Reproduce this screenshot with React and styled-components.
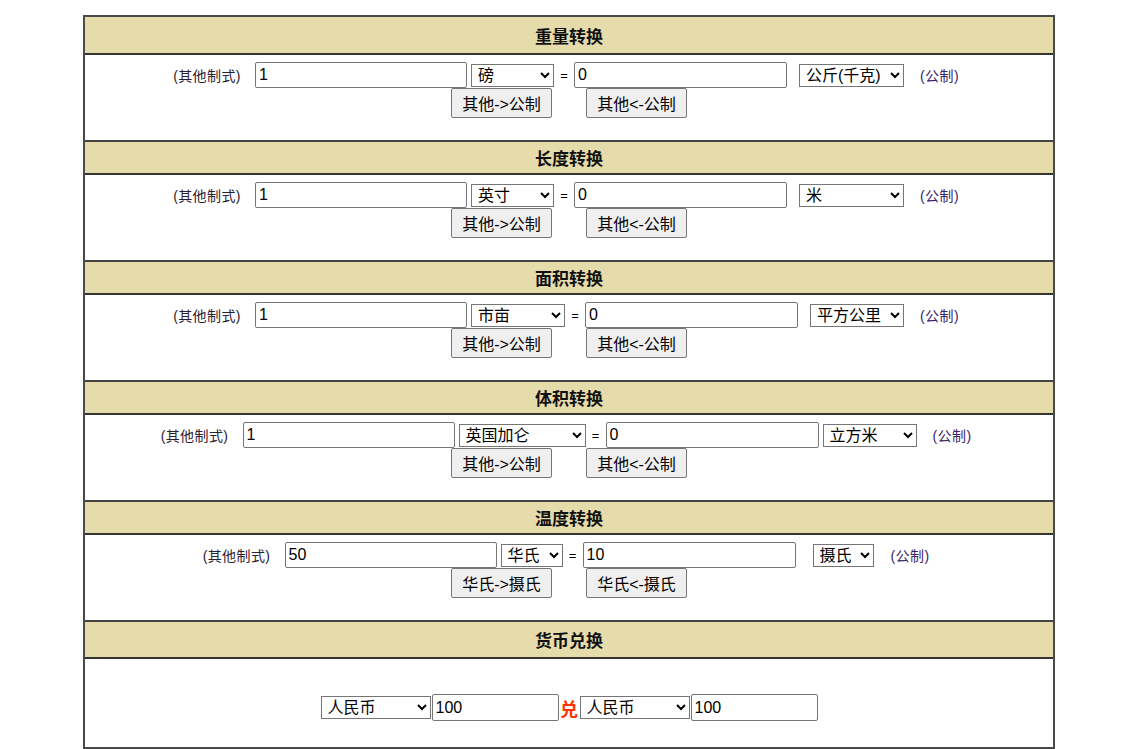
import React from 'react';
import styled, { createGlobalStyle } from 'styled-components';

const GlobalStyle = createGlobalStyle`
  html, body { margin: 0; padding: 0; background: #fff; }
  body { font-family: "Liberation Sans", "Noto Sans CJK SC", sans-serif; color: #000; }
`;

const Frame = styled.div`
  width: 968px;
  margin: 15px 0 0 83px;
  border: 2px solid #4a4a4a;
`;

const Section = styled.section`
  & + & { border-top: 2px solid #444; }
`;

const Header = styled.div`
  height: ${p => p.$h}px;
  background: #e6dcab;
  border-bottom: 2px solid #333;
  display: flex;
  align-items: center;
  justify-content: center;
  font-size: 17px;
  font-weight: bold;
  color: #111;
`;

const Body = styled.div`
  box-sizing: border-box;
  height: ${p => p.$h}px;
  padding-top: ${p => p.$pt}px;
`;

const Row = styled.div`
  display: flex;
  align-items: center;
  justify-content: center;
  height: ${p => p.$h || 26}px;
`;

const Label = styled.span`
  display: inline-block;
  width: ${p => p.$w}px;
  margin-left: ${p => p.$ml || 0}px;
  margin-right: ${p => p.$mr || 0}px;
  font-size: 14px;
  letter-spacing: 0.4px;
  text-align: center;
  white-space: nowrap;
  color: ${p => p.$c};
`;

const Field = styled.input`
  box-sizing: border-box;
  width: ${p => p.$w}px;
  height: ${p => p.$h || 26}px;
  margin: 0 0 0 ${p => p.$ml || 0}px;
  padding: 1px 3px;
  border: 1px solid #767676;
  border-radius: 2px;
  font-family: "Liberation Sans", "Noto Sans CJK SC", sans-serif;
  font-size: 16px;
  color: #000;
  background: #fff;
`;

const Picker = styled.select`
  box-sizing: border-box;
  width: ${p => p.$w}px;
  height: 23px;
  margin: 0 0 0 ${p => p.$ml || 0}px;
  padding: 0 0 0 2px;
  border: 1px solid #767676;
  border-radius: 0;
  font-family: "Liberation Sans", "Noto Sans CJK SC", sans-serif;
  font-size: 16px;
  color: #000;
  background: #fff;
`;

const Eq = styled.span`
  display: inline-block;
  width: 20px;
  text-align: center;
  font-size: 13px;
`;

const ButtonRow = styled.div`
  display: flex;
  justify-content: center;
  gap: 34px;
`;

const Btn = styled.button`
  box-sizing: border-box;
  width: 101px;
  height: 30px;
  padding: 0;
  background: #efefef;
  border: 1px solid #767676;
  border-radius: 2px;
  font-family: "Liberation Sans", "Noto Sans CJK SC", sans-serif;
  font-size: 16px;
  color: #000;
`;

const Dui = styled.span`
  display: inline-block;
  width: 19px;
  margin-left: 1px;
  font-size: 18px;
  font-weight: bold;
  color: #ff3300;
  text-align: center;
`;

const sections = [
  {
    title: '重量转换', hh: 36,
    from: ['磅', '盎司', '英担', '短吨', '长吨'], fw: 83, fml: 4,
    to: ['公斤(千克)', '克', '吨'], tw: 105, tml: 12, uml: 14,
    a: '1', b: '0', btn: ['其他->公制', '其他<-公制'],
  },
  {
    title: '长度转换', hh: 31,
    from: ['英寸', '英尺', '码', '英里', '海里'], fw: 83, fml: 4,
    to: ['米', '厘米', '毫米', '公里'], tw: 105, tml: 12, uml: 14,
    a: '1', b: '0', btn: ['其他->公制', '其他<-公制'],
  },
  {
    title: '面积转换', hh: 31,
    from: ['市亩', '英亩', '平方英尺', '平方英里'], fw: 94, fml: 4,
    to: ['平方公里', '平方米', '公顷'], tw: 94, tml: 12, uml: 14,
    a: '1', b: '0', btn: ['其他->公制', '其他<-公制'],
  },
  {
    title: '体积转换', hh: 31,
    from: ['英国加仑', '美国加仑', '立方英尺', '立方英寸'], fw: 127, fml: 4,
    to: ['立方米', '升', '毫升'], tw: 94, tml: 4, uml: 14,
    a: '1', b: '0', btn: ['其他->公制', '其他<-公制'],
  },
  {
    title: '温度转换', hh: 31,
    from: ['华氏', '列氏'], fw: 62, fml: 4,
    to: ['摄氏', '开氏'], tw: 61, tml: 17, uml: 15,
    a: '50', b: '10', btn: ['华氏->摄氏', '华氏<-摄氏'],
  },
];

const currencies = ['人民币', '美元', '欧元', '日元', '港币', '英镑'];

function Converter({ s }) {
  return (
    <Section>
      <Header $h={s.hh}>{s.title}</Header>
      <Body $h={85} $pt={7}>
        <Row>
          <Label $w={70} $c="#2a2233">(其他制式)</Label>
          <Field $w={212} $ml={13} defaultValue={s.a} />
          <Picker $w={s.fw} $ml={s.fml} defaultValue={s.from[0]}>
            {s.from.map(o => <option key={o}>{o}</option>)}
          </Picker>
          <Eq>=</Eq>
          <Field $w={213} defaultValue={s.b} />
          <Picker $w={s.tw} $ml={s.tml} defaultValue={s.to[0]}>
            {s.to.map(o => <option key={o}>{o}</option>)}
          </Picker>
          <Label $w={43} $ml={s.uml} $mr={5} $c="#3a2468">(公制)</Label>
        </Row>
        <ButtonRow>
          <Btn>{s.btn[0]}</Btn>
          <Btn>{s.btn[1]}</Btn>
        </ButtonRow>
      </Body>
    </Section>
  );
}

export default function App() {
  return (
    <>
      <GlobalStyle />
      <Frame>
        {sections.map(s => <Converter key={s.title} s={s} />)}
        <Section>
          <Header $h={35}>货币兑换</Header>
          <Body $h={88} $pt={35}>
            <Row $h={27}>
              <Picker $w={110} defaultValue="人民币">
                {currencies.map(o => <option key={o}>{o}</option>)}
              </Picker>
              <Field $w={127} $h={27} $ml={1} defaultValue="100" />
              <Dui>兑</Dui>
              <Picker $w={110} $ml={1} defaultValue="人民币">
                {currencies.map(o => <option key={o}>{o}</option>)}
              </Picker>
              <Field $w={127} $h={27} $ml={1} defaultValue="100" />
            </Row>
          </Body>
        </Section>
      </Frame>
    </>
  );
}
